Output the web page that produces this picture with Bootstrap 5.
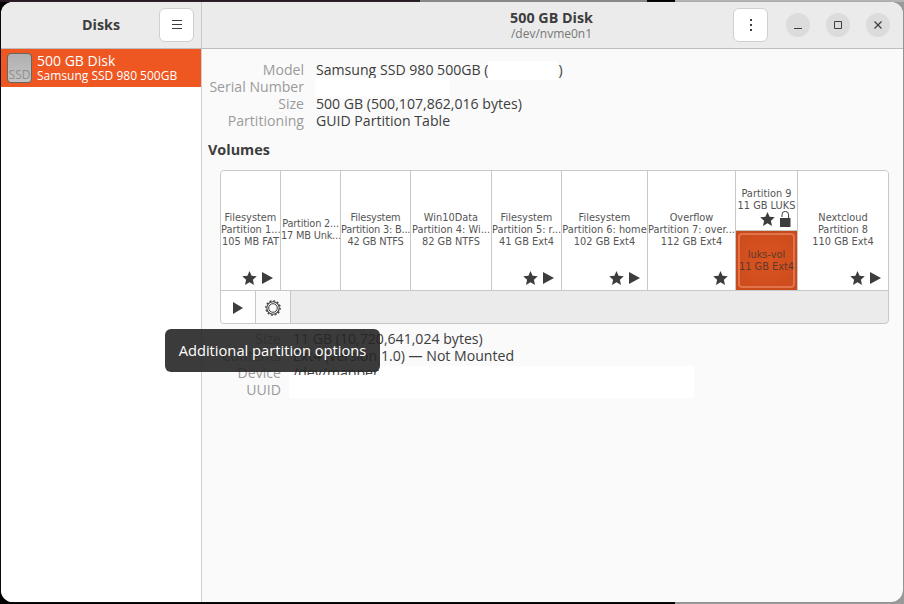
<!DOCTYPE html>
<html lang="en">
<head>
    <meta charset="UTF-8">
    <title>Disks</title>
    <link rel="stylesheet" href="https://cdn.jsdelivr.net/npm/bootstrap@5.3.0/dist/css/bootstrap.min.css">
    <style>
        html, body { height: 100%; }
        body {
            overflow: hidden; font-family: "Open Sans", "Noto Sans", sans-serif; font-size: 14.1px; color: #3d3d3d;
            background: linear-gradient(90deg, #2a1a24 0 420px, #8a8a8a 420px 647px, #000 647px 675px, #b4b4b4 675px) top / 100% 2px no-repeat,
                        linear-gradient(90deg, #000 0 675px, #9a9a9a 675px);
        }
        .app-window { width: 902px; height: 600px; margin: 2px 0 0 1px; border-radius: 12px; overflow: hidden; position: relative; background: #fafafa; box-shadow: 0 0 1px #666; }
        .head-bar { height: 47px; background: #ebebeb; border-bottom: 1px solid #bdbdbd; }
        .head-left { width: 201px; border-right: 1px solid #c8c8c8; padding-left: 42px; padding-right: 7px; }
        .head-btn { width: 35px; height: 34px; background: #fff; border: 1px solid #cfcfcf; border-radius: 6px; }
        .head-spacer { width: 168px; }
        .win-btn { width: 24px; height: 24px; border-radius: 50%; background: #dcdcdc; }
        .app-title { font-weight: 700; font-size: 14.3px; }
        .app-sub { font-size: 12px; color: #777; line-height: 14px; }
        .more-btn { margin-right: 18px; }
        .win-group { margin-right: 13px; }
        .side-pane { width: 201px; background: #fff; border-right: 1px solid #d0d0d0; }
        .disk-row { height: 38px; background: #ee5622; color: #fff; padding-left: 6px; }
        .disk-icon { width: 25px; height: 30px; border-radius: 4px; border: 1px solid #666; background: linear-gradient(#b0b0b0, #c4c4c4); color: #8f8f8f; font-size: 12px; line-height: 11px; padding-bottom: 2px; }
        .disk-text { margin-left: 5px; padding-bottom: 2px; }
        .disk-name { font-size: 14px; line-height: 17px; }
        .disk-model { font-size: 12px; line-height: 14px; }
        .main-pane { padding: 12px 15px 0 6px; position: relative; }
        .info-grid { display: grid; grid-template-columns: 96px 1fr; column-gap: 12px; line-height: 17px; }
        .info-grid-low { grid-template-columns: 73px 1fr; margin-top: 6px; position: relative; z-index: 1; }
        .info-key { text-align: right; color: #9a9a9a; }
        .blank-model { display: inline-block; width: 70px; height: 19px; margin-bottom: -2px; background: #fff; vertical-align: top; }
        .blank-serial { display: block; width: 135px; height: 19px; margin: 0 0 -2px -1px; background: #fff; }
        .blank-uuid { position: absolute; left: 87px; top: 317px; width: 405px; height: 32px; background: #fff; }
        .blank-cover { position: absolute; left: 87px; top: 326px; width: 405px; height: 23px; background: #fff; z-index: 2; }
        .vol-head { font-weight: 700; font-size: 14.4px; margin: 12px 0; line-height: 17px; }
        .vol-box { margin-left: 12px; width: 669px; height: 154px; border: 1px solid #c8c8c8; border-radius: 4px; overflow: hidden; background: #ebebeb; }
        .part-row { height: 120px; background: #fff; border-bottom: 1px solid #c8c8c8; }
        .part-cell { position: relative; border-right: 1px solid #c8c8c8; font-family: "DejaVu Sans", sans-serif; font-size: 9.8px; line-height: 12px; color: #555; white-space: nowrap; overflow: hidden; text-align: center; }
        .part-cell:last-child { border-right: 0; }
        .part-cell-text { padding-bottom: 2px; }
        .part-tight { letter-spacing: -.2px; }
        .part-marks { position: absolute; right: 7px; bottom: 5px; }
        .luks-top { height: 60px; border-bottom: 1px solid #c8c8c8; padding-bottom: 5px; }
        .luks-marks { align-self: flex-end; margin-right: 6px; height: 13px; }
        .luks-vol { height: 59px; background: #c94a1c; padding: 2px; }
        .luks-inner { height: 100%; border: 2px solid #e2744b; border-radius: 4px; background: radial-gradient(#dc5420, #cb4c1d); color: #5b3a2c; }
        .tool-btn { width: 35px; height: 33px; background: #fafafa; border-right: 1px solid #c8c8c8; }
        .tool-btn-white { background: #fff; }
        .pop-tip { position: absolute; left: 164px; top: 327px; width: 215px; height: 43px; border-radius: 6px; background: rgba(38, 38, 38, .9); color: #fff; font-size: 14.7px; z-index: 3; }
    </style>
</head>
<body>

<div class="app-window d-flex flex-column">
    <div class="head-bar d-flex flex-shrink-0">
        <div class="head-left d-flex align-items-center flex-shrink-0">
            <span class="app-title flex-grow-1 text-center">Disks</span>
            <div class="head-btn d-flex align-items-center justify-content-center">
                <svg width="12" height="10" viewBox="0 0 12 10"><path d="M1 .5h10M1 4.500h10M1 8.500h10" stroke="#3d3d3d" fill="none"/></svg>
            </div>
        </div>
        <div class="flex-grow-1 d-flex align-items-center">
            <div class="head-spacer flex-shrink-0"></div>
            <div class="flex-grow-1 text-center">
                <div class="app-title lh-sm">500 GB Disk</div>
                <div class="app-sub">/dev/nvme0n1</div>
            </div>
            <div class="d-flex align-items-center">
                <div class="head-btn more-btn d-flex align-items-center justify-content-center">
                    <svg width="4" height="12" viewBox="0 0 4 12"><path d="M1 0h2v2H1zM1 5h2v2H1zM1 10h2v2H1z" fill="#3d3d3d"/></svg>
                </div>
                <div class="win-group d-flex gap-3">
                    <div class="win-btn d-flex align-items-center justify-content-center">
                        <svg width="10" height="10" viewBox="0 0 10 10"><path d="M1 8.500h8" stroke="#3d3d3d" fill="none"/></svg>
                    </div>
                    <div class="win-btn d-flex align-items-center justify-content-center">
                        <svg width="10" height="10" viewBox="0 0 10 10"><path d="M1.500 1.500h7v7h-7z" stroke="#3d3d3d" fill="none"/></svg>
                    </div>
                    <div class="win-btn d-flex align-items-center justify-content-center">
                        <svg width="10" height="10" viewBox="0 0 10 10"><path d="M1.500 1.500l7 7M8.500 1.500l-7 7" stroke="#3d3d3d" stroke-width="1.200" fill="none"/></svg>
                    </div>
                </div>
            </div>
        </div>
    </div>

    <div class="d-flex flex-grow-1">
        <div class="side-pane flex-shrink-0">
            <div class="disk-row d-flex align-items-center">
                <div class="disk-icon d-flex align-items-end justify-content-center flex-shrink-0">SSD</div>
                <div class="disk-text">
                    <div class="disk-name">500 GB Disk</div>
                    <div class="disk-model">Samsung SSD 980 500GB</div>
                </div>
            </div>
        </div>

        <div class="main-pane flex-grow-1">
            <div class="info-grid">
                <div class="info-key">Model</div><div>Samsung SSD 980 500GB (<span class="blank-model"></span>)</div>
                <div class="info-key">Serial Number</div><div><span class="blank-serial"></span></div>
                <div class="info-key">Size</div><div>500 GB (500,107,862,016 bytes)</div>
                <div class="info-key">Partitioning</div><div>GUID Partition Table</div>
            </div>
            <div class="vol-head">Volumes</div>

            <div class="vol-box">
                <div class="part-row d-flex" id="parts"></div>
                <div class="d-flex">
                    <div class="tool-btn tool-btn-white d-flex align-items-center justify-content-center">
                        <svg width="12" height="12" viewBox="0 0 12 12"><path d="M1 0l10 6-10 6z" fill="#3d3d3d"/></svg>
                    </div>
                    <div class="tool-btn d-flex align-items-center justify-content-center">
                        <svg width="16" height="16" viewBox="0 0 16 16" fill="none" stroke="#3d3d3d"><circle cx="8" cy="8" r="6.200" stroke-width="1.100"/><circle cx="8" cy="8" r="4.300" stroke-width="1"/><circle cx="8" cy="8" r="7.200" stroke-width="1.200" stroke-dasharray="2 1.770"/></svg>
                    </div>
                </div>
            </div>

            <div class="blank-uuid"></div>
            <div class="info-grid info-grid-low">
                <div class="info-key">Size</div><div>11 GB (10,720,641,024 bytes)</div>
                <div class="info-key">Contents</div><div>Ext4 (version 1.0) — Not Mounted</div>
                <div class="info-key">Device</div><div>/dev/mapper</div>
                <div class="info-key">UUID</div><div></div>
            </div>
            <div class="blank-cover"></div>
        </div>
    </div>

    <div class="pop-tip d-flex align-items-center justify-content-center">Additional partition options</div>
</div>

<script>
    // partition widths and labels, left to right
    const STAR = '<svg width="15" height="14" viewBox="0 0 15 14"><path d="M7.500 0l2.100 4.800 5.200.5-3.900 3.500 1.100 5.100-4.500-2.700L3 13.900l1.100-5.100L.2 5.300l5.200-.5z" fill="#3d3d3d"/></svg>';
    const PLAY = '<svg width="11" height="12" viewBox="0 0 11 12" style="margin-left:5px"><path d="M0 0l11 6-11 6z" fill="#3d3d3d"/></svg>';
    const LOCK = '<svg width="11" height="16" viewBox="0 0 11 16" style="margin-left:5px"><path d="M2 6V3.700a3.300 3.300 0 0 1 6.600 0V7" fill="none" stroke="#3d3d3d"/><path d="M0 7h10.500v9H0z" fill="#3d3d3d"/></svg>';

    const parts = [
        { w: 60, lines: ['Filesystem', 'Partition 1...', '105 MB FAT'], marks: STAR + PLAY },
        { w: 60, tight: true, lines: ['Partition 2...', '17 MB Unk...'], marks: '' },
        { w: 70, tight: true, lines: ['Filesystem', 'Partition 3: B...', '42 GB NTFS'], marks: '' },
        { w: 81, lines: ['Win10Data', 'Partition 4: Wi...', '82 GB NTFS'], marks: '' },
        { w: 70, lines: ['Filesystem', 'Partition 5: r...', '41 GB Ext4'], marks: STAR + PLAY },
        { w: 86, lines: ['Filesystem', 'Partition 6: home', '102 GB Ext4'], marks: STAR + PLAY },
        { w: 88, lines: ['Overflow', 'Partition 7: over...', '112 GB Ext4'], marks: STAR },
        { w: 62, luks: true },
        { w: 90, lines: ['Nextcloud', 'Partition 8', '110 GB Ext4'], marks: STAR + PLAY }
    ];

    const row = document.getElementById('parts');
    parts.forEach(p => {
        const cell = document.createElement('div');
        cell.className = 'part-cell flex-shrink-0';
        cell.style.width = p.w + 'px';
        if (p.tight) cell.classList.add('part-tight');
        if (p.luks) {
            cell.innerHTML = '<div class="luks-top d-flex flex-column align-items-center justify-content-end">' +
                '<div>Partition 9</div><div>11 GB LUKS</div>' +
                '<div class="luks-marks d-flex align-items-center">' + STAR + LOCK + '</div></div>' +
                '<div class="luks-vol"><div class="luks-inner d-flex flex-column align-items-center justify-content-center">' +
                '<div>luks-vol</div><div>11 GB Ext4</div></div></div>';
        } else {
            cell.classList.add('d-flex', 'flex-column', 'justify-content-center', 'part-cell-text');
            cell.innerHTML = p.lines.map(l => '<div>' + l + '</div>').join('') +
                '<div class="part-marks d-flex align-items-center">' + p.marks + '</div>';
        }
        row.appendChild(cell);
    });
</script>
</body>
</html>
